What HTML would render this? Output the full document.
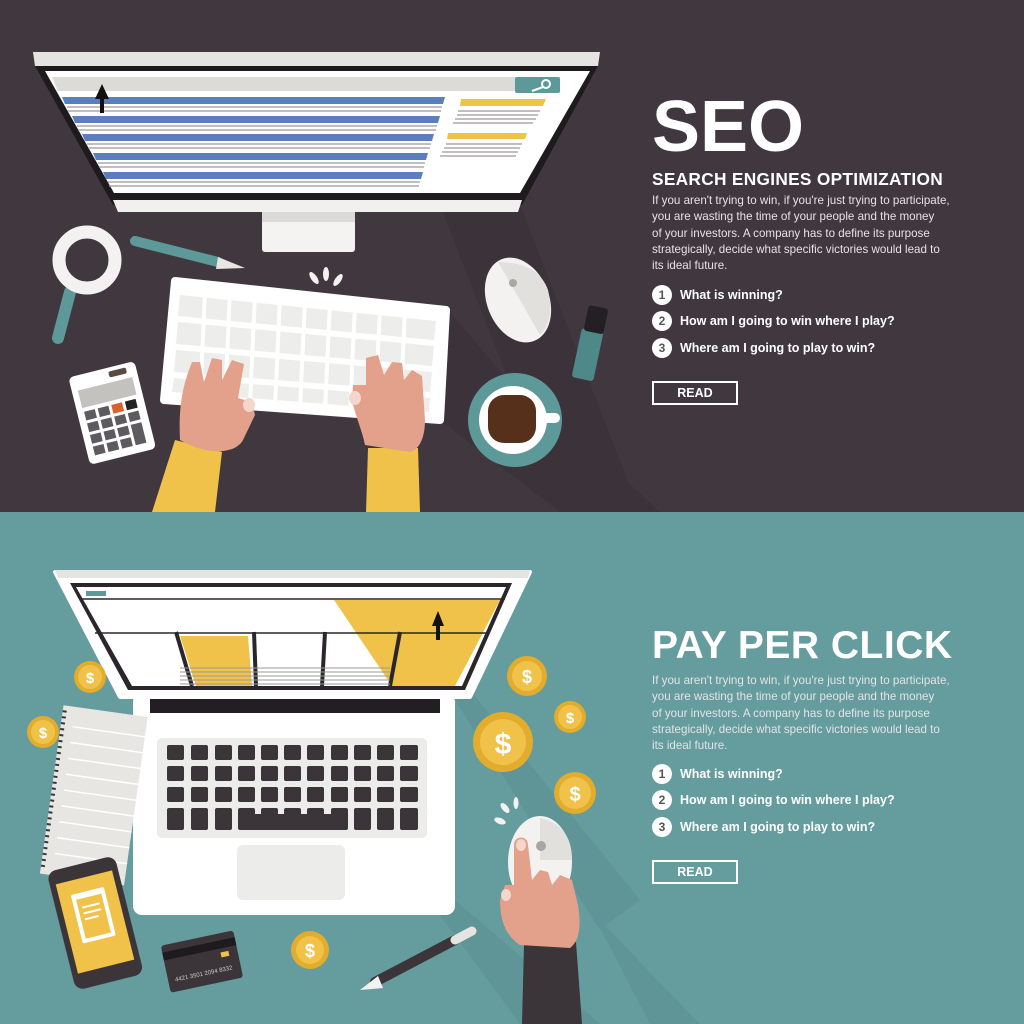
<!DOCTYPE html>
<html><head><meta charset="utf-8">
<style>
html,body{margin:0;padding:0;width:1024px;height:1024px;overflow:hidden;font-family:"Liberation Sans",sans-serif}
#top{position:absolute;left:0;top:0;width:1024px;height:512px;background:#41373f}
#bot{position:absolute;left:0;top:512px;width:1024px;height:512px;background:#659c9d}
svg{position:absolute;left:0;top:0}
.t{position:absolute;left:652px;color:#fff}
.h1{font-weight:bold;font-size:72px;line-height:72px;letter-spacing:0}
.h2{font-weight:bold;font-size:17.3px;letter-spacing:.3px;white-space:nowrap}
.p{font-size:11.6px;line-height:16.3px;color:#e6e3e6;white-space:nowrap}
.li{font-weight:bold;font-size:12.5px;white-space:nowrap;height:20px;line-height:20px}
.li b{display:inline-block;width:20px;height:20px;border-radius:50%;background:#fff;color:#555;text-align:center;margin-right:8px;font-size:12px;vertical-align:top}
.rd{border:2px solid #fff;width:82px;height:20px;line-height:20px;text-align:center;font-weight:bold;font-size:12.5px}
</style></head><body>
<div id="top"></div><div id="bot"></div>
<svg width="1024" height="1024" viewBox="0 0 1024 1024">
<g fill="#3b323a">
<polygon points="440,205 520,205 640,512 560,512"/>
<polygon points="448,310 440,420 560,512 620,512"/>
<polygon points="540,440 560,420 660,512 600,512"/>
</g>
<polygon points="33,52 600,52 598,66 35,66" fill="#e6e4e1"/>
<polygon points="35,66 598,66 522,205 113,205" fill="#1e1b1f"/>
<polygon points="45,71 590,71 520,193 114,193" fill="#fff"/>
<polygon points="113,200 522,200 518,212 118,212" fill="#f1f0ee"/>
<rect x="262" y="212" width="93" height="40" rx="3" fill="#f4f3f1"/>
<rect x="262" y="212" width="93" height="10" fill="#dcdad6"/>
<polygon points="52,77 560,77 555,91 58,91" fill="#dddbd8"/>
<rect x="515" y="77" width="45" height="16" rx="2" fill="#5e999a"/>
<circle cx="546" cy="84" r="4" fill="none" stroke="#fff" stroke-width="2"/><line x1="543" y1="87" x2="532" y2="91" stroke="#fff" stroke-width="2"/>
<g fill="#5b7fbd">
<polygon points="62,97 445,97 443,104 65,104"/>
<polygon points="72,116 440,116 438,123 75,123"/>
<polygon points="82,134 434,134 432,141 85,141"/>
<polygon points="93,153 428,153 426,160 96,160"/>
<polygon points="103,172 423,172 421,179 106,179"/>
</g>
<g stroke="#9a9896" stroke-width="1.3">
<line x1="67" y1="107" x2="442" y2="107"/><line x1="68" y1="111" x2="441" y2="111"/>
<line x1="77" y1="126" x2="437" y2="126"/><line x1="78" y1="130" x2="436" y2="130"/>
<line x1="87" y1="144" x2="431" y2="144"/><line x1="88" y1="148" x2="430" y2="148"/>
<line x1="98" y1="163" x2="425" y2="163"/><line x1="99" y1="167" x2="424" y2="167"/>
<line x1="108" y1="182" x2="420" y2="182"/><line x1="109" y1="186" x2="419" y2="186"/>
<line x1="458" y1="111" x2="540" y2="111"/><line x1="457" y1="115" x2="538" y2="115"/><line x1="455" y1="119" x2="536" y2="119"/><line x1="453" y1="123" x2="533" y2="123"/>
<line x1="446" y1="144" x2="522" y2="144"/><line x1="444" y1="148" x2="520" y2="148"/><line x1="442" y1="152" x2="518" y2="152"/><line x1="440" y1="156" x2="516" y2="156"/>
</g>
<polygon points="461,99 546,99 543,106 460,106" fill="#f0c24a"/>
<polygon points="448,133 527,133 525,139 447,139" fill="#f0c24a"/>
<polygon points="102,84 95,99 100,99 100,113 104,113 104,99 109,99" fill="#111"/>
<line x1="70" y1="292" x2="58" y2="338" stroke="#5e999a" stroke-width="12" stroke-linecap="round"/>
<circle cx="87" cy="260" r="28" fill="none" stroke="#f3f2f0" stroke-width="13"/>
<line x1="135" y1="241" x2="218" y2="262" stroke="#5e999a" stroke-width="10" stroke-linecap="round"/>
<polygon points="218,257 245,268 216,269" fill="#e8e6e3"/>
<g fill="#f3f2f0"><ellipse cx="314" cy="278" rx="3" ry="7" transform="rotate(-35 314 278)"/><ellipse cx="326" cy="274" rx="3" ry="7"/><ellipse cx="338" cy="280" rx="3" ry="7" transform="rotate(35 338 280)"/></g>
<polygon points="175,281 446,310 440,420 164,400" fill="#fff" stroke="#fff" stroke-width="8" stroke-linejoin="round"/>
<g fill="#ededeb">
<polygon points="180,295 436,321 434,340 178,316"/>
<polygon points="178,322 434,346 432,366 176,344"/>
<polygon points="176,350 432,372 430,392 174,372"/>
<polygon points="174,378 430,398 429,412 172,392"/>
</g>
<g stroke="#fff" stroke-width="4">
<line x1="205" y1="290" x2="200" y2="400"/><line x1="230" y1="292" x2="225" y2="402"/><line x1="255" y1="295" x2="250" y2="404"/><line x1="280" y1="297" x2="275" y2="406"/><line x1="305" y1="300" x2="300" y2="408"/><line x1="330" y1="302" x2="325" y2="410"/><line x1="355" y1="305" x2="350" y2="412"/><line x1="380" y1="307" x2="375" y2="414"/><line x1="405" y1="310" x2="400" y2="416"/>
</g>
<polygon points="175,440 222,452 215,512 152,512" fill="#f0c24a"/>
<path d="M180,440 C178,400 185,380 192,362 L200,362 L204,382 L212,358 L222,360 L222,380 L232,360 L244,364 L238,398 L252,402 L255,415 L243,440 C235,455 205,455 180,440Z" fill="#e3a08a"/>
<ellipse cx="249" cy="405" rx="6" ry="7" fill="#f4d6cc"/>
<polygon points="368,448 418,448 420,512 366,512" fill="#f0c24a"/>
<path d="M365,445 C362,430 355,415 352,400 L353,385 L366,385 L366,358 L378,355 L384,375 L392,362 L402,363 L404,380 L412,370 L422,376 L425,420 C425,440 418,450 410,452 Z" fill="#e3a08a"/>
<ellipse cx="355" cy="398" rx="6" ry="7" fill="#f4d6cc"/>
<g transform="rotate(-14 112 412)">
<rect x="78" y="368" width="68" height="90" rx="5" fill="#fff"/>
<rect x="84" y="383" width="56" height="18" fill="#c4c2bf"/>
<rect x="118" y="372" width="18" height="6" rx="2" fill="#5b4a42"/>
<g fill="#5d5b60">
<rect x="85" y="405" width="11" height="9"/><rect x="99" y="405" width="11" height="9"/><rect x="113" y="405" width="11" height="9" fill="#d9632e"/><rect x="127" y="405" width="11" height="9" fill="#222"/>
<rect x="85" y="417" width="11" height="9"/><rect x="99" y="417" width="11" height="9"/><rect x="113" y="417" width="11" height="9"/><rect x="127" y="417" width="11" height="9"/>
<rect x="85" y="429" width="11" height="9"/><rect x="99" y="429" width="11" height="9"/><rect x="113" y="429" width="11" height="9"/><rect x="127" y="429" width="11" height="21"/>
<rect x="85" y="441" width="11" height="9"/><rect x="99" y="441" width="11" height="9"/><rect x="113" y="441" width="11" height="9"/>
</g></g>
<ellipse cx="518" cy="300" rx="31" ry="44" transform="rotate(-22 518 300)" fill="#f3f2f0"/>
<path d="M498,262 Q520,300 540,335 Q555,320 548,290 Q538,262 498,262Z" fill="#e2e0dd"/>
<circle cx="513" cy="283" r="4" fill="#a9a7a5"/>
<g transform="rotate(12 590 343)">
<rect x="579" y="330" width="22" height="50" rx="3" fill="#4f8889"/>
<rect x="581" y="306" width="20" height="26" rx="3" fill="#231f24"/>
</g>
<circle cx="515" cy="420" r="47" fill="#5e999a"/>
<rect x="535" y="413" width="25" height="10" rx="5" fill="#fff"/>
<circle cx="513" cy="420" r="34" fill="#fff"/>
<rect x="488" y="395" width="48" height="48" rx="16" fill="#56301a"/>
<g fill="#5f9596">
<polygon points="455,700 470,690 640,900 600,930"/>
<polygon points="440,915 455,900 600,1024 520,1024"/>
<polygon points="575,880 580,900 700,1024 650,1024"/>
</g>
<rect x="133" y="693" width="322" height="222" rx="9" fill="#fff"/>
<rect x="150" y="697" width="290" height="16" fill="#221e23"/>
<rect x="157" y="738" width="270" height="100" rx="5" fill="#ececea"/>
<g fill="#3b3539">
<g id="r1"><rect x="167" y="745" width="17" height="15" rx="2"/><rect x="191" y="745" width="17" height="15" rx="2"/><rect x="215" y="745" width="17" height="15" rx="2"/><rect x="238" y="745" width="17" height="15" rx="2"/><rect x="261" y="745" width="17" height="15" rx="2"/><rect x="284" y="745" width="17" height="15" rx="2"/><rect x="307" y="745" width="17" height="15" rx="2"/><rect x="331" y="745" width="17" height="15" rx="2"/><rect x="354" y="745" width="17" height="15" rx="2"/><rect x="377" y="745" width="17" height="15" rx="2"/><rect x="400" y="745" width="18" height="15" rx="2"/></g>
<use href="#r1" y="21"/><use href="#r1" y="42"/><use href="#r1" y="63"/>
<rect x="167" y="814" width="17" height="16" rx="2"/><rect x="191" y="814" width="17" height="16" rx="2"/><rect x="215" y="814" width="17" height="16" rx="2"/><rect x="238" y="814" width="110" height="16" rx="2"/><rect x="354" y="814" width="17" height="16" rx="2"/><rect x="377" y="814" width="17" height="16" rx="2"/><rect x="400" y="814" width="18" height="16" rx="2"/>
</g>
<rect x="237" y="845" width="108" height="55" rx="6" fill="#ececea"/>
<polygon points="55,572 530,572 470,697 120,697" fill="#fff" stroke="#fff" stroke-width="4" stroke-linejoin="round"/>
<polygon points="55,570 530,570 528,578 58,578" fill="#e6e4e1"/>
<polygon points="70,583 512,583 465,690 128,690" fill="#2b262b"/>
<polygon points="76,587 506,587 462,686 132,686" fill="#fff"/>
<polygon points="334,600 500,600 455,686 392,686" fill="#f0c24a"/>
<polygon points="180,636 248,636 252,686 196,686" fill="#f0c24a"/>
<g stroke="#2b262b" stroke-width="4"><line x1="176" y1="632" x2="192" y2="686"/><line x1="254" y1="632" x2="256" y2="686"/><line x1="325" y1="632" x2="322" y2="686"/><line x1="400" y1="632" x2="390" y2="686"/></g>
<line x1="80" y1="599" x2="505" y2="599" stroke="#2b262b" stroke-width="1.5"/>
<line x1="95" y1="633" x2="490" y2="633" stroke="#2b262b" stroke-width="1.5"/>
<g stroke="#9b999a" stroke-width="1"><line x1="180" y1="668" x2="320" y2="668"/><line x1="180" y1="672" x2="320" y2="672"/><line x1="180" y1="676" x2="320" y2="676"/><line x1="180" y1="680" x2="320" y2="680"/><line x1="180" y1="684" x2="390" y2="684"/><line x1="258" y1="668" x2="390" y2="668"/><line x1="258" y1="672" x2="390" y2="672"/><line x1="258" y1="676" x2="390" y2="676"/><line x1="258" y1="680" x2="390" y2="680"/></g>
<rect x="86" y="591" width="20" height="5" fill="#5e999a"/>
<polygon points="438,611 432,626 436,626 436,640 440,640 440,626 444,626" fill="#111"/>
<g transform="rotate(8 92 790)">
<rect x="52" y="710" width="85" height="170" fill="#e7e6e3"/>
<g stroke="#fff" stroke-width="1.5"><line x1="64" y1="730" x2="137" y2="730"/><line x1="64" y1="746" x2="137" y2="746"/><line x1="64" y1="762" x2="137" y2="762"/><line x1="64" y1="778" x2="137" y2="778"/><line x1="64" y1="794" x2="137" y2="794"/><line x1="64" y1="810" x2="137" y2="810"/><line x1="64" y1="826" x2="137" y2="826"/><line x1="64" y1="842" x2="137" y2="842"/><line x1="64" y1="858" x2="137" y2="858"/></g>
<line x1="54" y1="715" x2="54" y2="875" stroke="#3b3539" stroke-width="4" stroke-dasharray="2 4"/>
</g>
<g transform="rotate(-14 95 922)">
<rect x="60" y="862" width="70" height="122" rx="9" fill="#3b3539"/>
<rect x="66" y="876" width="58" height="92" fill="#f0c24a"/>
<rect x="78" y="890" width="34" height="50" rx="2" fill="#fff"/>
<rect x="82" y="896" width="26" height="40" fill="#f0c24a"/>
<g stroke="#fff" stroke-width="2"><line x1="86" y1="905" x2="104" y2="905"/><line x1="86" y1="911" x2="104" y2="911"/><line x1="86" y1="917" x2="100" y2="917"/></g>
</g>
<g transform="rotate(-12 200 962)">
<rect x="165" y="938" width="74" height="48" rx="3" fill="#3b3539"/>
<rect x="165" y="945" width="74" height="8" fill="#1e1b1f"/>
<rect x="222" y="957" width="8" height="5" fill="#f0c24a"/>
<text x="172" y="976" font-size="6" fill="#ccc" font-family="Liberation Sans">4421 3501 2094 8332</text>
</g>
<line x1="375" y1="982" x2="455" y2="940" stroke="#3b3539" stroke-width="10" stroke-linecap="round"/>
<polygon points="378,976 383,988 360,990" fill="#f3f2f0"/>
<line x1="455" y1="940" x2="472" y2="931" stroke="#e6e4e1" stroke-width="9" stroke-linecap="round"/>
<g font-family="Liberation Sans" font-weight="bold" fill="#fff" text-anchor="middle">
<g><circle cx="90" cy="677" r="16" fill="#e2ac2c"/><circle cx="90" cy="677" r="12" fill="#f0c24a"/><text x="90" y="683" font-size="15">$</text></g>
<g><circle cx="43" cy="732" r="16" fill="#e2ac2c"/><circle cx="43" cy="732" r="12" fill="#f0c24a"/><text x="43" y="738" font-size="15">$</text></g>
<g><circle cx="527" cy="676" r="20" fill="#e2ac2c"/><circle cx="527" cy="676" r="15" fill="#f0c24a"/><text x="527" y="683" font-size="18">$</text></g>
<g><circle cx="570" cy="717" r="16" fill="#e2ac2c"/><circle cx="570" cy="717" r="12" fill="#f0c24a"/><text x="570" y="723" font-size="15">$</text></g>
<g><circle cx="503" cy="742" r="30" fill="#e2ac2c"/><circle cx="503" cy="742" r="23" fill="#f0c24a"/><text x="503" y="754" font-size="30">$</text></g>
<g><circle cx="575" cy="793" r="21" fill="#e2ac2c"/><circle cx="575" cy="793" r="16" fill="#f0c24a"/><text x="575" y="801" font-size="20">$</text></g>
<g><circle cx="310" cy="950" r="19" fill="#e2ac2c"/><circle cx="310" cy="950" r="14" fill="#f0c24a"/><text x="310" y="957" font-size="18">$</text></g>
</g>
<g fill="#f3f2f0"><ellipse cx="500" cy="821" rx="6" ry="3" transform="rotate(20 500 821)"/><ellipse cx="505" cy="808" rx="3" ry="6" transform="rotate(-40 505 808)"/><ellipse cx="516" cy="803" rx="2.5" ry="6"/></g>
<ellipse cx="540" cy="862" rx="32" ry="46" fill="#f3f2f0"/>
<path d="M540,818 Q572,825 572,860 L540,860Z" fill="#e2e0dd"/>
<circle cx="541" cy="846" r="5" fill="#a9a7a5"/>
<polygon points="524,945 576,942 582,1024 522,1024" fill="#3b3539"/>
<path d="M520,945 C505,935 500,920 500,900 L505,885 L514,885 L514,845 C514,835 528,835 528,845 L532,880 L540,870 L548,872 L552,885 L560,875 L572,880 L578,905 C582,930 578,942 570,948 Z" fill="#e3a08a"/>
<ellipse cx="521" cy="845" rx="5" ry="6" fill="#f4d6cc"/>
<ellipse cx="506" cy="895" rx="5" ry="6" fill="#f4d6cc"/>
</svg>

<div class="t h1" style="top:91px">SEO</div>
<div class="t h2" style="top:169px">SEARCH ENGINES OPTIMIZATION</div>
<div class="t p" style="top:193px">If you aren't trying to win, if you're just trying to participate,<br>you are wasting the time of your people and the money<br>of your investors. A company has to define its purpose<br>strategically, decide what specific victories would lead to<br>its ideal future.</div>
<div class="t li" style="top:285px"><b>1</b>What is winning?</div>
<div class="t li" style="top:311px"><b>2</b>How am I going to win where I play?</div>
<div class="t li" style="top:338px"><b>3</b>Where am I going to play to win?</div>
<div class="t rd" style="top:381px">READ</div>

<div class="t h1" style="top:626px;font-size:39px;line-height:40px;letter-spacing:.5px">PAY PER CLICK</div>
<div class="t p" style="top:673px">If you aren't trying to win, if you're just trying to participate,<br>you are wasting the time of your people and the money<br>of your investors. A company has to define its purpose<br>strategically, decide what specific victories would lead to<br>its ideal future.</div>
<div class="t li" style="top:764px"><b>1</b>What is winning?</div>
<div class="t li" style="top:790px"><b>2</b>How am I going to win where I play?</div>
<div class="t li" style="top:817px"><b>3</b>Where am I going to play to win?</div>
<div class="t rd" style="top:860px">READ</div>
</body></html>
